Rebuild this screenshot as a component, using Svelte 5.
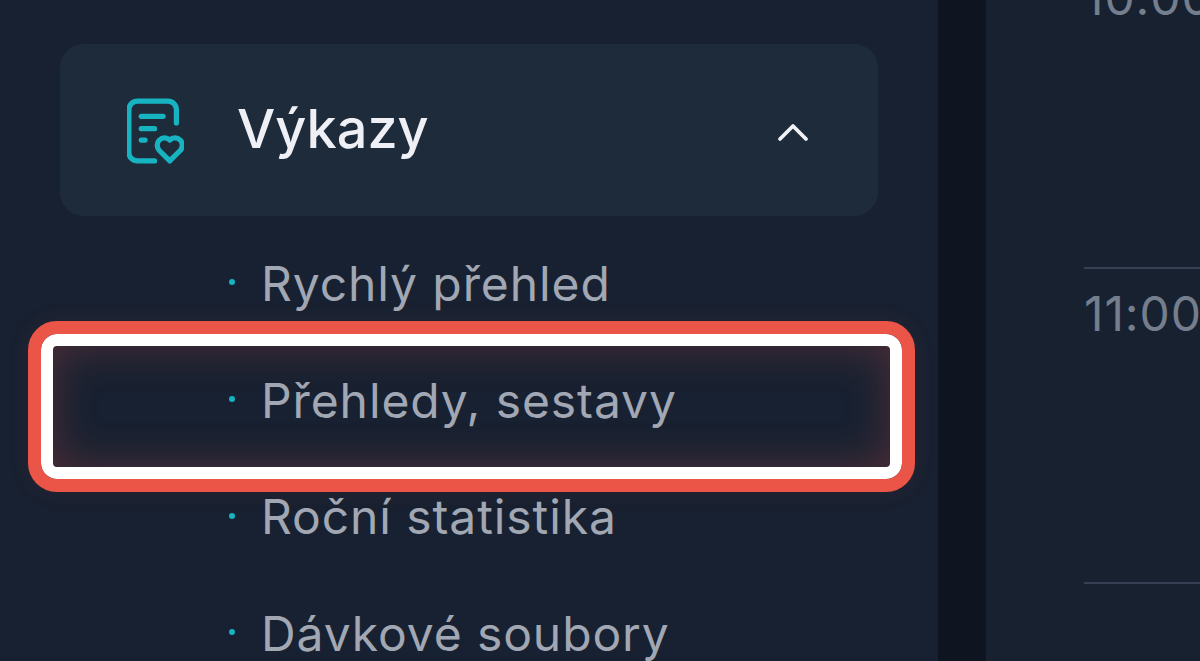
<script>
  const items = ["Rychlý přehled", "Přehledy, sestavy", "Roční statistika", "Dávkové soubory"];
  const times = ["10:00", "11:00"];
</script>

<div class="page">
  <aside class="sidebar">
    <div class="group-head">
      <svg class="doc-icon" viewBox="0 0 60 68" fill="none" stroke="#17b3c1" stroke-width="5.5" stroke-linecap="round" stroke-linejoin="round">
        <path d="M29 65H11a9 9 0 0 1-9-9V11a9 9 0 0 1 9-9h32a9 9 0 0 1 9 9v14" />
        <path d="M15 18h23" />
        <path d="M15 31h14" />
        <path d="M15 43h4" />
        <path d="M45 65 L34 54 a8 8 0 0 1 0-11 a8 8 0 0 1 11 0 a8 8 0 0 1 11 0 a8 8 0 0 1 0 11 Z" />
      </svg>
      <span class="group-title">Výkazy</span>
      <svg class="chevron" viewBox="0 0 32 20" fill="none" stroke="#f0f2f6" stroke-width="3.8" stroke-linecap="round" stroke-linejoin="round">
        <path d="M3 17 16 4l13 13" />
      </svg>
    </div>

    <ul class="menu">
      {#each items as item, i}
        <li class:marked={i === 1}>
          <span class="dot"></span>
          <span>{item}</span>
        </li>
      {/each}
    </ul>
  </aside>

  <div class="divider"></div>

  <main class="agenda">
    {#each times as time}
      <div class="slot">
        <span>{time}</span>
      </div>
    {/each}
  </main>
</div>

<style>
  :global(body) {
    margin: 0;
    background: #0f1520;
  }

  .page {
    display: flex;
    width: 1200px;
    height: 661px;
    overflow: hidden;
    font-family: Inter, "Noto Sans", sans-serif;
  }

  .sidebar {
    width: 938px;
    flex: none;
    box-sizing: border-box;
    padding: 44px 60px 0;
    background: #182131;
  }

  .group-head {
    display: flex;
    align-items: center;
    height: 172px;
    padding: 0 69px 0 67px;
    box-sizing: border-box;
    border-radius: 24px;
    background: #1e2b3a;
  }

  .doc-icon {
    width: 57px;
    height: 67px;
    flex: none;
    margin-top: 3px;
  }

  .group-title {
    margin-left: 53px;
    margin-bottom: 4px;
    color: #eef0f5;
    font-size: 54px;
    font-weight: 500;
  }

  .chevron {
    width: 32px;
    height: 20px;
    margin-left: auto;
    margin-top: 3px;
  }

  .menu {
    list-style: none;
    margin: 9px 0 0;
    padding: 0;
  }

  .menu li {
    position: relative;
    display: flex;
    align-items: center;
    gap: 26px;
    height: 116.7px;
    padding-left: 169px;
    color: #a1a7b3;
    font-size: 48px;
    font-weight: 400;
    letter-spacing: 0.9px;
  }

  .dot {
    width: 6px;
    height: 6px;
    margin-bottom: 2px;
    border-radius: 50%;
    background: #17b3c1;
  }

  .marked::after {
    content: "";
    position: absolute;
    left: -19px;
    right: -24px;
    top: -8px;
    bottom: -21px;
    border: 12px solid #fff;
    border-radius: 16px;
    outline: 13px solid #ea5548;
    box-shadow: inset 0 0 44px rgba(234, 85, 72, 0.26), 0 0 24px 13px rgba(234, 85, 72, 0.07);
  }

  .divider {
    width: 48px;
    flex: none;
    background: #0f1520;
  }

  .agenda {
    flex: 1;
    padding: 0 0 0 98px;
    background: #172130;
  }

  .slot {
    height: 315px;
    box-sizing: border-box;
    padding-top: 17px;
    color: #747e8d;
    font-size: 48px;
    letter-spacing: 0.9px;
    line-height: 56px;
    border-bottom: 2px solid #354152;
    white-space: nowrap;
  }

  .slot:first-child {
    height: 299px;
    padding-top: 0;
    margin-top: -30px;
  }
</style>
